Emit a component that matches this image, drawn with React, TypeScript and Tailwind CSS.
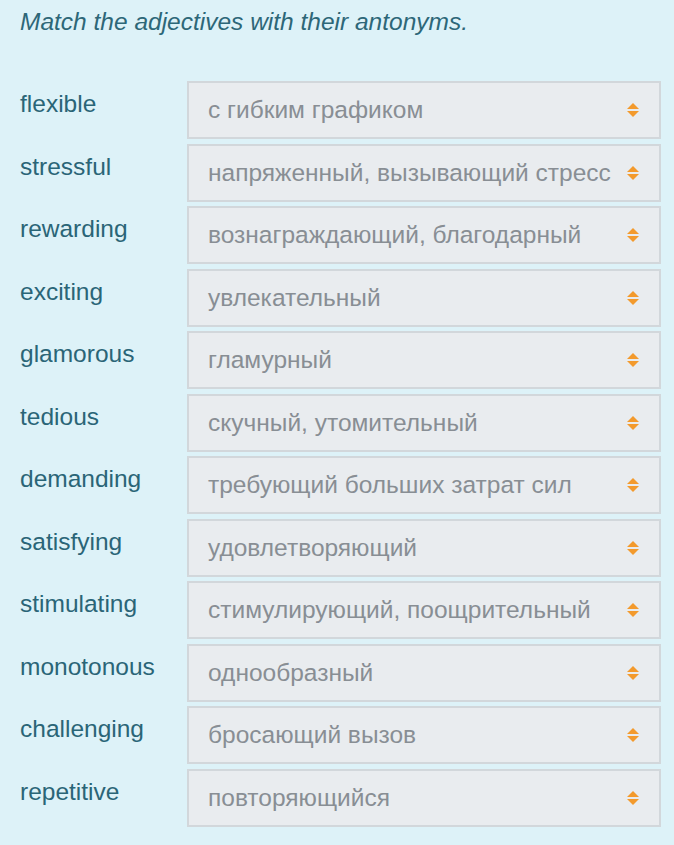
import React from "react";

const rows: [string, string][] = [
  ["flexible", "с гибким графиком"],
  ["stressful", "напряженный, вызывающий стресс"],
  ["rewarding", "вознаграждающий, благодарный"],
  ["exciting", "увлекательный"],
  ["glamorous", "гламурный"],
  ["tedious", "скучный, утомительный"],
  ["demanding", "требующий больших затрат сил"],
  ["satisfying", "удовлетворяющий"],
  ["stimulating", "стимулирующий, поощрительный"],
  ["monotonous", "однообразный"],
  ["challenging", "бросающий вызов"],
  ["repetitive", "повторяющийся"],
];

function Arrows() {
  return (
    <svg width="12" height="14" viewBox="0 0 12 14" className="shrink-0">
      <polygon points="6,0 12,6 0,6" fill="#f39a2d" />
      <polygon points="0,8 12,8 6,14" fill="#f39a2d" />
    </svg>
  );
}

export default function App() {
  return (
    <div
      className="w-[674px] h-[845px] bg-[#ddf2f8] pl-[20px] pr-[13px] pt-[8px]"
      style={{ fontFamily: '"Liberation Sans", Arial, sans-serif' }}
    >
      <div className="italic text-[24.5px] leading-[28px] text-[#2d6778]">
        Match the adjectives with their antonyms.
      </div>
      <div className="mt-[45px] flex flex-col gap-[4.5px]">
        {rows.map(([en, ru]) => (
          <div key={en} className="flex items-start">
            <div className="w-[167px] shrink-0 pt-[9px] text-[24.5px] leading-[28px] text-[#2a6577]">
              {en}
            </div>
            <div className="flex-1 h-[58px] border-2 border-[#d2d7db] bg-[#e9ecef] flex items-center pl-[19px] pr-[20px]">
              <span className="flex-1 text-[24.5px] leading-[28px] text-[#888e94] whitespace-nowrap">
                {ru}
              </span>
              <Arrows />
            </div>
          </div>
        ))}
      </div>
    </div>
  );
}
